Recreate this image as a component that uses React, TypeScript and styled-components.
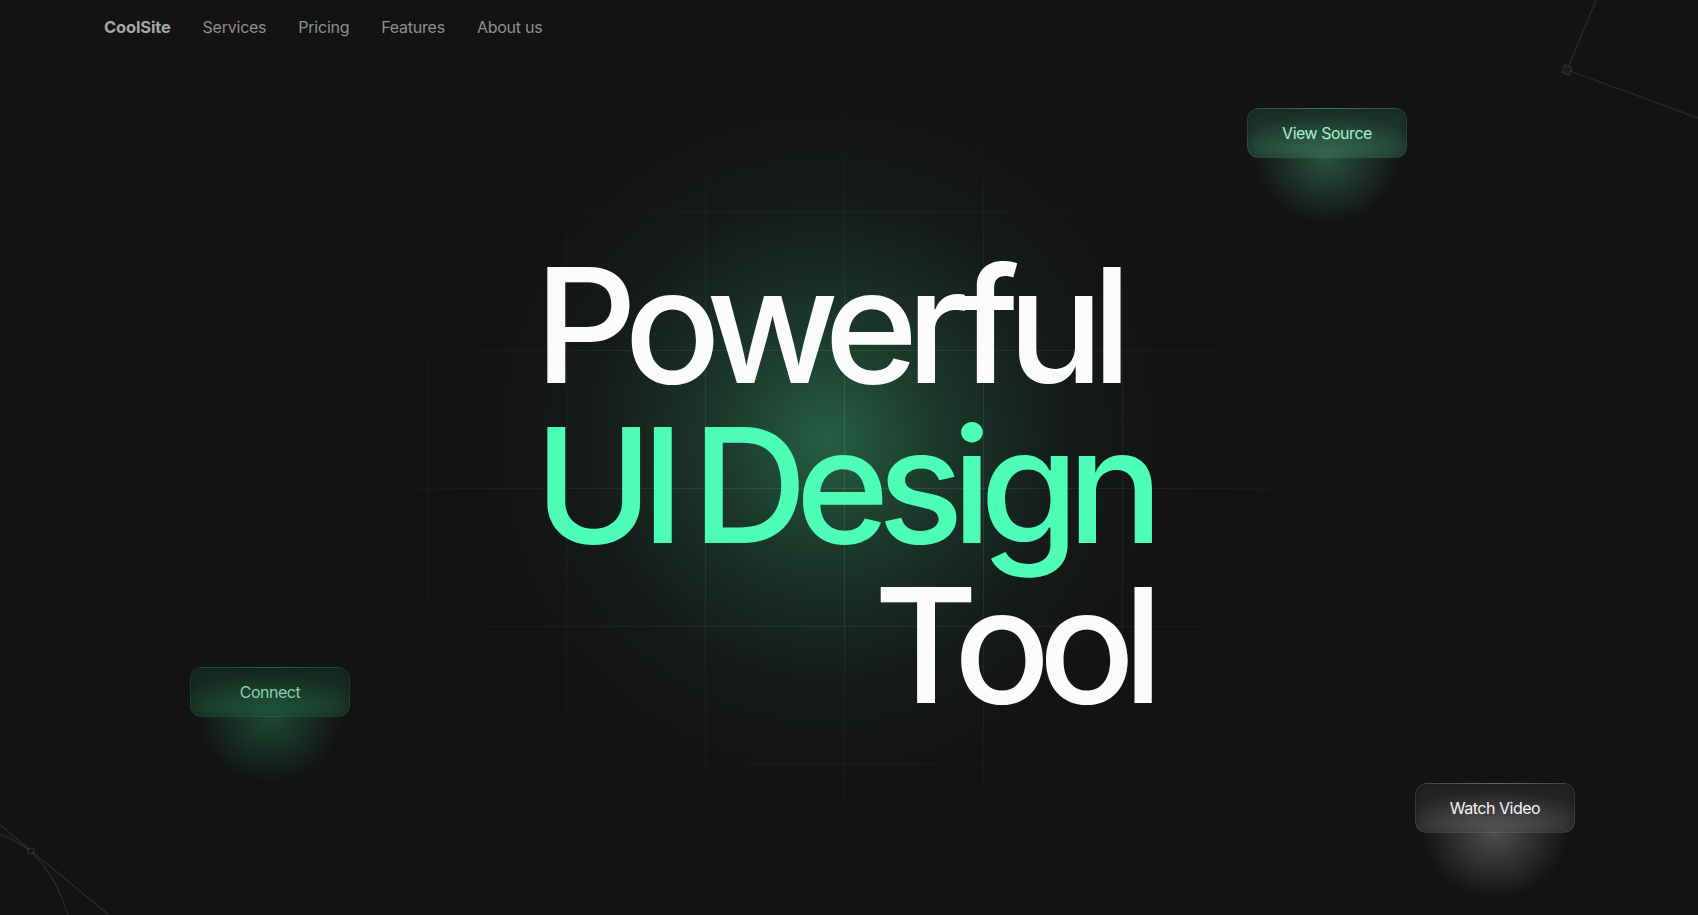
import React from "react";
import styled, { createGlobalStyle, css } from "styled-components";

const GlobalStyle = createGlobalStyle`
  html, body {
    margin: 0;
    padding: 0;
    background: #131313;
  }
  #root {
    min-height: 100vh;
  }
  * { box-sizing: border-box; }
`;

const Page = styled.div`
  position: relative;
  min-height: 100vh;
  display: flex;
  flex-direction: column;
  overflow: hidden;
  background: #131313;
  font-family: Inter, "Liberation Sans", sans-serif;
`;

const Backdrop = styled.div`
  position: absolute;
  inset: 0;
  pointer-events: none;
  background: radial-gradient(
    circle 340px at 828px 440px,
    rgba(50, 140, 100, 0.62) 0%,
    rgba(40, 115, 82, 0.36) 35%,
    rgba(30, 80, 60, 0.13) 70%,
    rgba(19, 19, 19, 0) 100%
  );
`;

const Grid = styled.div`
  position: absolute;
  inset: 0;
  pointer-events: none;
  background-image:
    linear-gradient(to right, rgba(255, 255, 255, 0.085) 1px, transparent 1px),
    linear-gradient(to bottom, rgba(255, 255, 255, 0.085) 1px, transparent 1px);
  background-size: 139px 138px;
  background-position: 10px 74px;
  -webkit-mask-image: radial-gradient(ellipse 560px 400px at 845px 480px, #000 20%, rgba(0,0,0,0.5) 60%, transparent 100%);
  mask-image: radial-gradient(ellipse 560px 400px at 845px 480px, #000 20%, rgba(0,0,0,0.5) 60%, transparent 100%);
`;

const Decor = styled.svg`
  position: absolute;
  inset: 0;
  width: 100%;
  height: 100%;
  pointer-events: none;
`;

const Nav = styled.nav`
  position: relative;
  z-index: 1;
  display: flex;
  align-items: center;
  gap: 32px;
  height: 54px;
  padding: 0 104px;
`;

const Brand = styled.a`
  font-size: 16.5px;
  font-weight: 700;
  color: #a6a6a6;
  text-decoration: none;
  letter-spacing: -0.01em;
`;

const NavLink = styled.a`
  font-size: 16px;
  font-weight: 400;
  color: #8f8f8f;
  text-decoration: none;
  letter-spacing: -0.015em;
`;

const Hero = styled.main`
  position: relative;
  z-index: 1;
  flex: 1;
  display: flex;
  align-items: center;
  justify-content: center;
`;

const Headline = styled.h1`
  margin: 0 12px 0 0;
  display: flex;
  flex-direction: column;
  font-family: Inter, "Liberation Sans", sans-serif;
  font-weight: 500;
  font-size: 160px;
  line-height: 160px;
  letter-spacing: -0.075em;
  word-spacing: -0.07em;
`;

const Line = styled.span<{ $accent?: boolean; $end?: boolean }>`
  display: block;
  white-space: nowrap;
  color: ${(p) => (p.$accent ? "#4dfdb5" : "#fbfbfb")};
  align-self: ${(p) => (p.$end ? "flex-end" : "flex-start")};
`;

type Tone = "mint" | "green" | "gray";

const tones: Record<Tone, ReturnType<typeof css>> = {
  mint: css`
    color: #a3f5cd;
    border-color: rgba(110, 220, 165, 0.08);
    background:
      radial-gradient(ellipse 70% 85% at 50% 100%, rgba(90, 190, 145, 0.45), rgba(60, 140, 105, 0) 100%),
      rgba(38, 78, 62, 0.55);
    &::after {
      background: radial-gradient(ellipse 50% 100% at 50% 0%, rgba(70, 160, 120, 0.45), rgba(19, 19, 19, 0) 100%);
    }
  `,
  green: css`
    color: #82d6ab;
    border-color: rgba(80, 200, 140, 0.07);
    background:
      radial-gradient(ellipse 70% 85% at 50% 100%, rgba(45, 150, 100, 0.45), rgba(35, 110, 75, 0) 100%),
      rgba(26, 60, 45, 0.6);
    &::after {
      background: radial-gradient(ellipse 50% 100% at 50% 0%, rgba(40, 140, 95, 0.45), rgba(19, 19, 19, 0) 100%);
    }
  `,
  gray: css`
    color: #f4f4f4;
    border-color: rgba(255, 255, 255, 0.07);
    background:
      radial-gradient(ellipse 70% 85% at 50% 100%, rgba(130, 130, 130, 0.6), rgba(80, 80, 80, 0) 100%),
      rgba(44, 44, 44, 0.7);
    &::after {
      background: radial-gradient(ellipse 50% 100% at 50% 0%, rgba(150, 150, 150, 0.45), rgba(19, 19, 19, 0) 100%);
    }
  `,
};

const FloatButton = styled.button<{ $tone: Tone; $x: number; $y: number }>`
  position: absolute;
  z-index: 2;
  left: ${(p) => p.$x}px;
  top: ${(p) => p.$y}px;
  width: 160px;
  height: 50px;
  border-radius: 12px;
  border: 1px solid transparent;
  font-family: Inter, "Liberation Sans", sans-serif;
  font-size: 16px;
  font-weight: 400;
  letter-spacing: -0.03em;
  cursor: pointer;
  box-shadow: inset 0 0 12px rgba(0, 0, 0, 0.3);
  &::after {
    content: "";
    position: absolute;
    left: 4%;
    top: 100%;
    width: 92%;
    height: 66px;
    pointer-events: none;
  }
  ${(p) => tones[p.$tone]}
`;

export default function App() {
  return (
    <>
      <GlobalStyle />
      <Page>
        <Backdrop />
        <Grid />
        <Decor viewBox="0 0 1698 915" preserveAspectRatio="none">
          <g stroke="rgba(255,255,255,0.1)" strokeWidth="1.2" fill="none">
            <polyline points="1596,0 1567,70 1698,118" />
            <rect x="1563" y="66" width="8" height="8" transform="rotate(20 1567 70)" fill="#1c1c1c" />
            <line x1="0" y1="825" x2="109" y2="915" />
            <path d="M0,834 Q48,850 68,915" />
            <circle cx="31" cy="851" r="3" fill="#161616" />
          </g>
        </Decor>
        <Nav>
          <Brand href="#">CoolSite</Brand>
          <NavLink href="#">Services</NavLink>
          <NavLink href="#">Pricing</NavLink>
          <NavLink href="#">Features</NavLink>
          <NavLink href="#">About us</NavLink>
        </Nav>
        <Hero>
          <Headline>
            <Line>Powerful</Line>
            <Line $accent>UI Design</Line>
            <Line $end>Tool</Line>
          </Headline>
        </Hero>
        <FloatButton $tone="mint" $x={1247} $y={108}>View Source</FloatButton>
        <FloatButton $tone="green" $x={190} $y={667}>Connect</FloatButton>
        <FloatButton $tone="gray" $x={1415} $y={783}>Watch Video</FloatButton>
      </Page>
    </>
  );
}
